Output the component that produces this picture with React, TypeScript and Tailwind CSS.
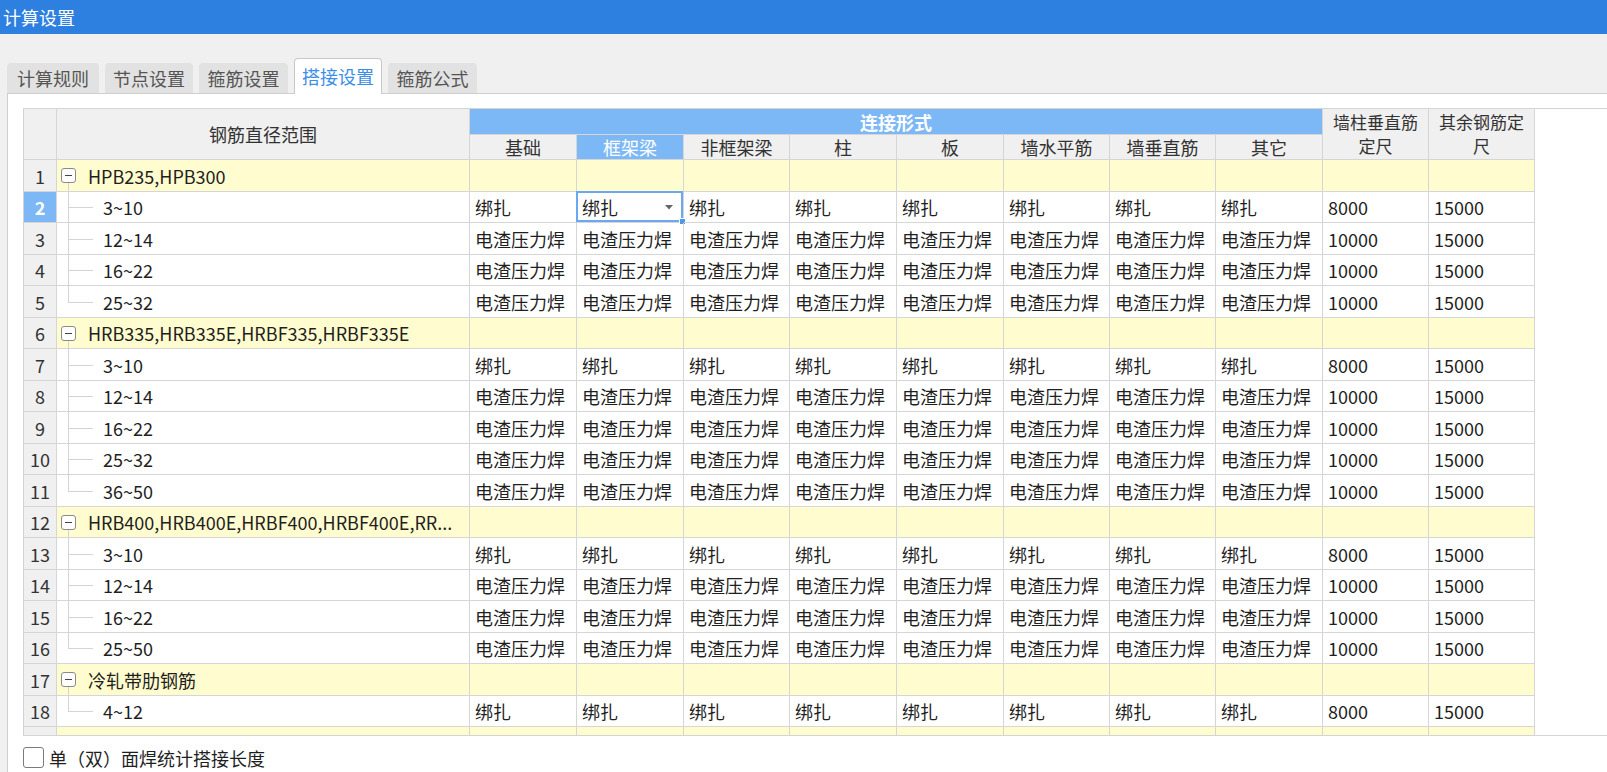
import React from 'react';

const FONT = '"Noto Sans CJK SC", "Noto Sans", sans-serif';

// column widths in px (incl. right border)
const DATA_COLS = [107, 107, 106, 107, 107, 106, 106, 107, 106, 106];
const SUB_HEADERS = ['基础', '框架梁', '非框架梁', '柱', '板', '墙水平筋', '墙垂直筋', '其它'];
const TABS = [
  { label: '计算规则', w: 'w-[92px]' },
  { label: '节点设置', w: 'w-[88px]' },
  { label: '箍筋设置', w: 'w-[89px]' },
  { label: '搭接设置', w: 'w-[88px]' },
  { label: '箍筋公式', w: 'w-[89px]' },
];

type Row =
  | { kind: 'group'; no: number; name: string }
  | { kind: 'item'; no: number; range: string; tie: boolean; last: boolean };

const groups: { name: string; items: string[] }[] = [
  { name: 'HPB235,HPB300', items: ['3~10', '12~14', '16~22', '25~32'] },
  { name: 'HRB335,HRB335E,HRBF335,HRBF335E', items: ['3~10', '12~14', '16~22', '25~32', '36~50'] },
  { name: 'HRB400,HRB400E,HRBF400,HRBF400E,RR...', items: ['3~10', '12~14', '16~22', '25~50'] },
  { name: '冷轧带肋钢筋', items: ['4~12'] },
  // next group is scrolled out of view, only its top edge shows
  { name: '', items: [] },
];

const rows: Row[] = [];
let n = 1;
groups.forEach((g) => {
  rows.push({ kind: 'group', no: n++, name: g.name });
  g.items.forEach((r, i) => {
    rows.push({ kind: 'item', no: n++, range: r, tie: r === '3~10' || r === '4~12', last: i === g.items.length - 1 });
  });
});

const MinusBox = () => (
  <span className="relative z-10 flex h-[15px] w-[15px] items-center justify-center rounded-[3px] border border-[#8a8a8a] bg-white">
    <span className="h-px w-[7px] bg-[#444]" />
  </span>
);

const SelectedOverlay = () => (
  <div className="pointer-events-none absolute -left-px -top-px bottom-0 right-0">
    <div className="absolute inset-0 border-2 border-[#6aa8ef]" />
    <svg className="absolute right-[10px] top-1/2 -mt-[2px]" width="8" height="5" viewBox="0 0 8 5">
      <path d="M0 0 L8 0 L4 4.5 Z" fill="#666" />
    </svg>
    <div className="absolute -bottom-[3px] -right-[3px] h-[7px] w-[7px] border border-white bg-[#4f97ea]" />
  </div>
);

export default function App() {
  return (
    <div className="flex h-[772px] w-[1607px] flex-col overflow-hidden bg-[#f0f0f0] text-[#1f1f1f]" style={{ fontFamily: FONT }}>
      {/* title bar */}
      <div className="flex h-[34px] shrink-0 items-center bg-[#2e80e0] pl-[3px] text-[18px] leading-none text-white">计算设置</div>

      {/* tabs */}
      <div className="flex h-[59px] shrink-0 items-end gap-[6px] pl-[7px] text-[18px] leading-none">
        {TABS.map((t, i) =>
          i === 3 ? (
            <div key={t.label} className={`relative z-10 -mb-px flex h-[36px] ${t.w} items-center justify-center rounded-t-[4px] border border-b-0 border-[#c8c8c8] bg-white pb-[2px] text-[#3b8ee9]`}>
              {t.label}
            </div>
          ) : (
            <div key={t.label} className={`flex h-[30px] ${t.w} items-center justify-center rounded-t-[4px] bg-[#e2e2e2] text-[#555]`}>
              {t.label}
            </div>
          )
        )}
      </div>

      {/* panel */}
      <div className="ml-[7px] flex flex-1 flex-col border-l border-t border-[#cfcfcf] bg-white pl-[15px] pt-[14px]">
        <div className="h-[628px] shrink-0 overflow-hidden border-b border-l border-t border-[#d4d4d4]">
          <table className="table-fixed border-separate border-spacing-0 text-[18px] leading-[20px]" style={{ width: 1511 }}>
            <colgroup>
              <col style={{ width: 33 }} />
              <col style={{ width: 413 }} />
              {DATA_COLS.map((w, i) => (
                <col key={i} style={{ width: w }} />
              ))}
            </colgroup>
            <thead>
              <tr className="h-[26px]">
                <th rowSpan={2} className="border-b border-r border-[#d6d6d6] bg-[#f0f0f0] p-0" />
                <th rowSpan={2} className="border-b border-r border-[#d6d6d6] bg-[#f0f0f0] p-0 font-normal text-[#333]">钢筋直径范围</th>
                <th colSpan={8} className="border-b border-r border-[#d6d6d6] bg-[#7db8f6] p-0 font-bold text-white">连接形式</th>
                <th rowSpan={2} className="border-b border-r border-[#d6d6d6] bg-[#f0f0f0] p-0 text-[17px] font-normal leading-[24px] text-[#333]">
                  墙柱垂直筋<br />定尺
                </th>
                <th rowSpan={2} className="border-b border-r border-[#d6d6d6] bg-[#f0f0f0] p-0 text-[17px] font-normal leading-[24px] text-[#333]">
                  其余钢筋定<br />尺
                </th>
              </tr>
              <tr className="h-[25px]">
                {SUB_HEADERS.map((h, i) => (
                  <th
                    key={h}
                    className={
                      i === 1
                        ? 'border-b border-r border-[#d6d6d6] bg-[#7db8f6] p-0 font-normal text-white'
                        : 'border-b border-r border-[#d6d6d6] bg-[#f0f0f0] p-0 font-normal text-[#333]'
                    }
                  >
                    {h}
                  </th>
                ))}
              </tr>
            </thead>
            <tbody>
              {rows.map((r) => {
                const h = r.no % 2 ? 'h-[32px]' : 'h-[31px]';
                if (r.kind === 'group') {
                  return (
                    <tr key={r.no} className={h}>
                      <td className="border-b border-r border-[#d6d6d6] bg-[#f0f0f0] p-0 text-center text-[#333]">{r.name ? r.no : ''}</td>
                      <td className="relative border-b border-r border-[#d6d6d6] bg-[#fffdcf] p-0">
                        <div className="absolute bottom-0 left-[11px] top-1/2 w-px bg-[#d4d4d4]" />
                        <div className="flex items-center gap-[12px] pl-[4px]">
                          <MinusBox />
                          <span className="whitespace-nowrap">{r.name}</span>
                        </div>
                      </td>
                      {DATA_COLS.map((_, i) => (
                        <td key={i} className="border-b border-r border-[#d6d6d6] bg-[#fffdcf] p-0" />
                      ))}
                    </tr>
                  );
                }
                const sel = r.no === 2;
                const word = r.tie ? '绑扎' : '电渣压力焊';
                return (
                  <tr key={r.no} className={h}>
                    <td
                      className={
                        sel
                          ? 'border-b border-r border-[#d6d6d6] bg-[#7db8f6] p-0 text-center font-bold text-white'
                          : 'border-b border-r border-[#d6d6d6] bg-[#f0f0f0] p-0 text-center text-[#333]'
                      }
                    >
                      {r.no}
                    </td>
                    <td className="relative border-b border-r border-[#d6d6d6] p-0">
                      <div className={r.last ? 'absolute left-[11px] top-0 h-1/2 w-px bg-[#d4d4d4]' : 'absolute -bottom-px left-[11px] top-0 w-px bg-[#d4d4d4]'} />
                      <div className="absolute left-[11px] top-1/2 h-px w-[25px] bg-[#d4d4d4]" />
                      <span className="pl-[46px]">{r.range}</span>
                    </td>
                    {DATA_COLS.map((_, i) => (
                      <td key={i} className="relative whitespace-nowrap border-b border-r border-[#d6d6d6] px-[5px] py-0">
                        {i < 8 ? word : i === 8 ? (r.tie ? '8000' : '10000') : '15000'}
                        {sel && i === 1 && <SelectedOverlay />}
                      </td>
                    ))}
                  </tr>
                );
              })}
            </tbody>
          </table>
        </div>

        {/* option */}
        <label className="mt-[11px] flex items-center gap-[5px] text-[18px] leading-none">
          <span className="h-[21px] w-[21px] rounded-[3px] border border-[#7a7a7a] bg-white" />
          <span>单（双）面焊统计搭接长度</span>
        </label>
      </div>
    </div>
  );
}
